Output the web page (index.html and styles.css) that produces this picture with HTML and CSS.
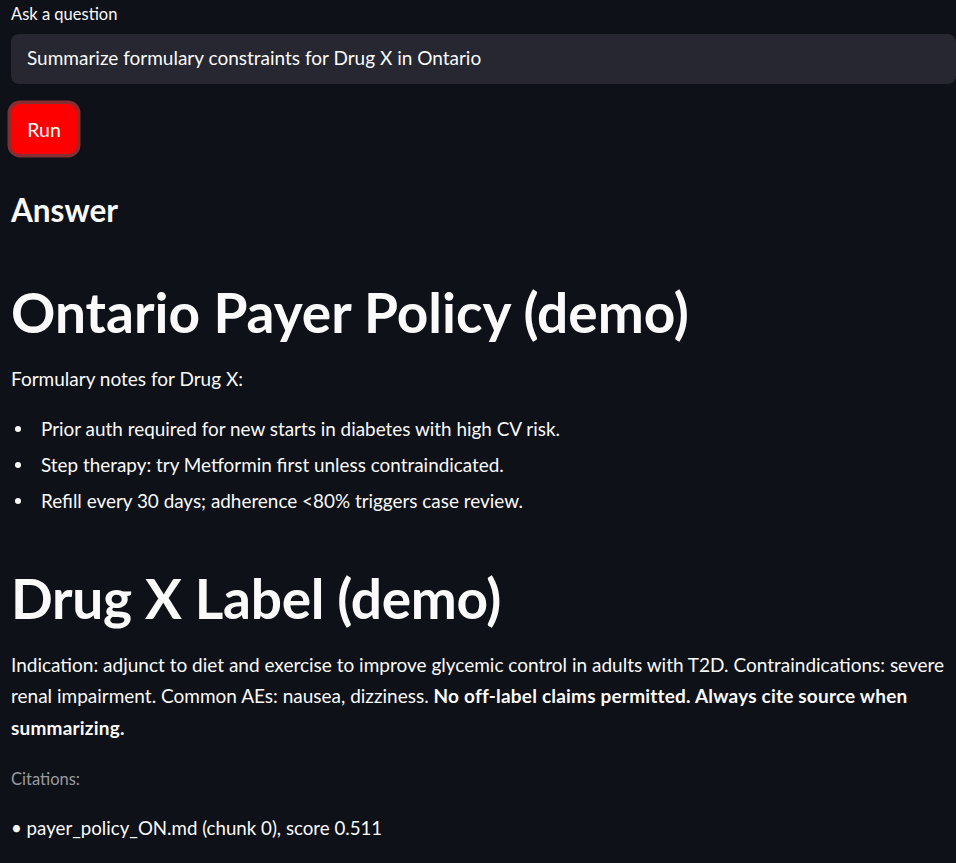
FILE: index.html
```html
<!DOCTYPE html>
<html lang="en">
<head>
<meta charset="utf-8">
<title>Ask a question</title>
<link rel="stylesheet" href="styles.css">
</head>
<body>
<main class="app">
  <label class="field-label" for="q">Ask a question</label>
  <div class="input-wrap">
    <input id="q" class="text-input" type="text" value="Summarize formulary constraints for Drug X in Ontario">
  </div>
  <div class="btn-row">
    <button class="run-btn" type="button">Run</button>
  </div>

  <h3 class="subheader">Answer</h3>

  <section class="answer">
    <h1 class="doc-title first">Ontario Payer Policy (demo)</h1>
    <p class="para single">Formulary notes for Drug X:</p>
    <ul class="bullets">
      <li>Prior auth required for new starts in diabetes with high CV risk.</li>
      <li>Step therapy: try Metformin first unless contraindicated.</li>
      <li>Refill every 30 days; adherence &lt;80% triggers case review.</li>
    </ul>
    <h1 class="doc-title second">Drug X Label (demo)</h1>
    <p class="para label-text">Indication: adjunct to diet and exercise to improve glycemic control in adults with T2D. Contraindications: severe<br>renal impairment. Common AEs: nausea, dizziness. <strong>No off-label claims permitted. Always cite source when<br>summarizing.</strong></p>
  </section>

  <p class="caption">Citations:</p>
  <p class="para citation">• payer_policy_ON.md (chunk 0), score 0.511</p>
</main>
</body>
</html>
```

FILE: styles.css
```css
html, body {
  margin: 0;
  padding: 0;
  background: #0e1117;
}

body {
  color: #fafafa;
  font-family: "Lato", "Source Sans Pro", "Noto Sans", sans-serif;
  height: 863px;
  overflow: hidden;
}

.app {
  padding: 0 0 0 11px;
  display: flex;
  flex-direction: column;
  align-items: stretch;
}

.field-label {
  display: block;
  margin-top: 4px;
  font-size: 16.5px;
  line-height: 20px;
  height: 20px;
}

.input-wrap {
  margin-top: 10px;
  height: 50px;
  box-sizing: border-box;
  padding-bottom: 3px;
  background: #262730;
  border-radius: 8px;
  display: flex;
  align-items: center;
}

.text-input {
  flex: 1;
  background: transparent;
  border: none;
  outline: none;
  color: #fafafa;
  font-family: inherit;
  font-size: 19px;
  line-height: 24px;
  padding: 0 16px;
}

.btn-row {
  margin-top: 20px;
  display: flex;
}

.run-btn {
  width: 66px;
  height: 50px;
  background: #ff0000;
  color: #ffffff;
  border: none;
  border-radius: 9px;
  box-shadow: 0 0 0 3.5px #862e31;
  font-family: inherit;
  font-size: 19.5px;
  padding: 0;
}

.subheader {
  margin: 36px 0 0;
  font-size: 31.5px;
  font-weight: 700;
  line-height: 40px;
  height: 40px;
}

.answer {
  display: flex;
  flex-direction: column;
}

.doc-title {
  margin: 0;
  font-size: 55px;
  font-weight: 700;
  line-height: 70px;
  height: 70px;
}

.doc-title.first {
  margin-top: 46.5px;
}

.doc-title.second {
  margin-top: 46px;
  letter-spacing: -0.25px;
}

.para {
  margin: 0;
  font-size: 19px;
  line-height: 31.5px;
}

.para.single {
  margin-top: 16px;
}

.bullets {
  margin: 19px 0 0;
  padding: 0;
  list-style: none;
  font-size: 18.9px;
  line-height: 31.5px;
  display: flex;
  flex-direction: column;
  gap: 4.5px;
}

.bullets li {
  display: flex;
  align-items: center;
}

.bullets li::before {
  content: "";
  flex: none;
  width: 6px;
  height: 6px;
  border-radius: 50%;
  background: #fafafa;
  margin: 0 20px 0 4px;
}

.para.label-text {
  margin-top: 16px;
}

.label-text strong {
  font-weight: 700;
  letter-spacing: 0.2px;
}

.caption {
  margin: 24px 0 0;
  font-size: 16.5px;
  line-height: 24px;
  color: #999ba0;
}

.para.citation {
  margin-top: 22px;
  font-size: 18.7px;
}
```
